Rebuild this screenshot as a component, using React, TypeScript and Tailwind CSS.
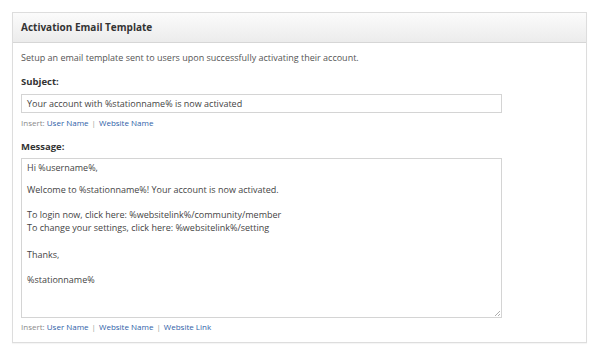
import React from 'react';

const InsertLinks = ({ links }: { links: string[] }) => (
  <div className="text-[8px] leading-[10px] text-[#8a8a8a]">
    Insert:{' '}
    {links.map((l, i) => (
      <React.Fragment key={l}>
        {i > 0 && <span className="mx-[3px] text-[#a0a0a0]">|</span>}
        <a className="text-[#2f62a8]">{l}</a>
      </React.Fragment>
    ))}
  </div>
);

const App = () => {
  const lines: { text: string; mt: string }[] = [
    { text: 'Hi %username%,', mt: 'mt-0' },
    { text: 'Welcome to %stationname%! Your account is now activated.', mt: 'mt-[9px]' },
    { text: 'To login now, click here: %websitelink%/community/member', mt: 'mt-[13px]' },
    { text: 'To change your settings, click here: %websitelink%/setting', mt: 'mt-0' },
    { text: 'Thanks,', mt: 'mt-[15px]' },
    { text: '%stationname%', mt: 'mt-[12px]' },
  ];

  return (
    <div
      className="w-[599px] h-[355px] bg-white pt-3 pl-3 text-[#444]"
      style={{ fontFamily: '"Open Sans", "Noto Sans", sans-serif' }}
    >
      <div className="w-[575px] h-[331px] border border-[#dddddd] shadow-[0_1px_1px_rgba(0,0,0,0.04)]">
        {/* Header */}
        <div className="h-[30px] flex items-center px-2 border-b border-[#d6d6d6] bg-gradient-to-b from-[#fbfbfb] to-[#ececec]">
          <span className="text-[10px] leading-[12px] font-bold text-[#333] -mt-[1px]">Activation Email Template</span>
        </div>

        {/* Body */}
        <div className="px-2">
          <p className="mt-[10px] text-[9px] leading-[10px] text-[#555]">
            Setup an email template sent to users upon successfully activating their account.
          </p>

          <div className="mt-[14px] text-[9.5px] leading-[10px] font-bold text-[#333]">Subject:</div>
          <div className="mt-[7px] w-[481px] h-[19px] border border-[#d4d4d4] flex items-center px-[5px] text-[9px] text-[#444]">
            Your account with %stationname% is now activated
          </div>
          <div className="mt-[5px]">
            <InsertLinks links={['User Name', 'Website Name']} />
          </div>

          <div className="mt-[14px] text-[9.5px] leading-[10px] font-bold text-[#333]">Message:</div>
          <div className="relative mt-[6px] w-[481px] h-[160px] border border-[#d4d4d4] px-[5px] pt-[3px] text-[9px] leading-[12.5px] text-[#444]">
            {lines.map((l) => (
              <div key={l.text} className={l.mt}>
                {l.text}
              </div>
            ))}
            <svg className="absolute right-0 bottom-0" width="8" height="8" viewBox="0 0 8 8">
              <path d="M7 2 L2 7 M7 5 L5 7" stroke="#9a9a9a" strokeWidth="0.8" />
            </svg>
          </div>
          <div className="mt-[4px]">
            <InsertLinks links={['User Name', 'Website Name', 'Website Link']} />
          </div>
        </div>
      </div>
    </div>
  );
};

export default App;
